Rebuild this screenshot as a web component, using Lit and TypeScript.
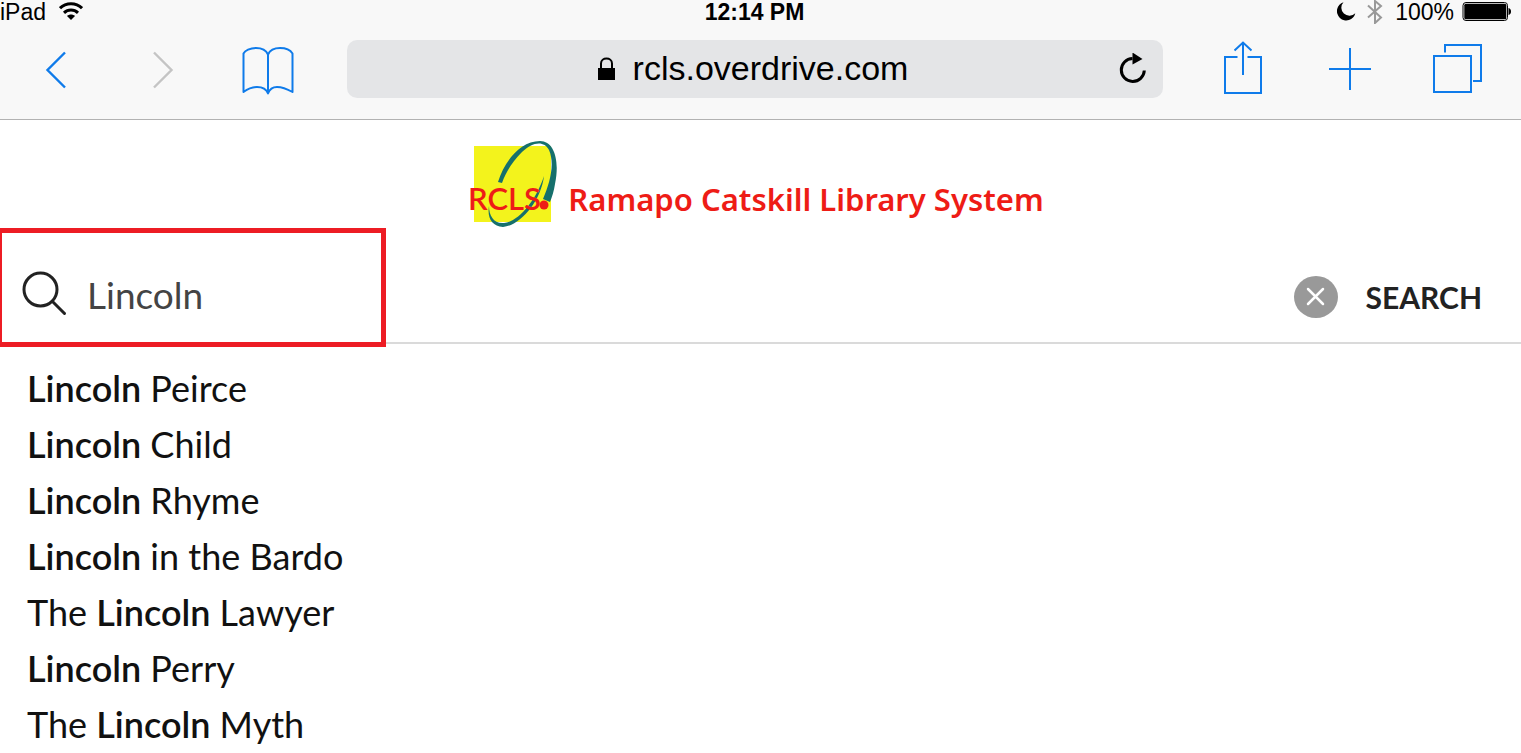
import { LitElement, html, css } from "lit";
import { customElement, property, state } from "lit/decorators.js";

@customElement("status-bar")
class StatusBar extends LitElement {
  static styles = css`
    :host {
      display: grid;
      grid-template-columns: 1fr auto 1fr;
      align-items: center;
      height: 24px;
      font: 23px/24px "Liberation Sans", Arial, sans-serif;
      color: #000;
    }
    .side { display: flex; align-items: center; }
    .left { gap: 13px; }
    .right { justify-content: flex-end; padding-right: 9px; }
    .time { font-weight: 700; padding-right: 12px; }
    .moon { margin-right: 11px; }
    .bluetooth { margin-right: 12px; }
    .battery { margin-left: 8px; }
    svg { display: block; flex: none; }
  `;

  render() {
    return html`
      <div class="side left">
        <span>iPad</span>
        <svg width="24" height="24" viewBox="0 0 24 24" fill="none" stroke="#000" stroke-width="3">
          <path d="M1 8.2C7 2.2 17 2.2 23 8.2" />
          <path d="M5 12.8C9 9 15 9 19 12.8" />
          <path d="M12 20L8 16C10.2 14 13.8 14 16 16Z" fill="#000" stroke="none" />
        </svg>
      </div>
      <span class="time">12:14 PM</span>
      <div class="side right">
        <svg class="moon" width="19" height="24" viewBox="0 0 19 24">
          <path d="M6.5 2.2A9.3 9.3 0 1 0 18.3 13.2A8 8 0 0 1 6.5 2.2Z" />
        </svg>
        <svg class="bluetooth" width="16" height="24" viewBox="0 0 16 24" fill="none" stroke="#999" stroke-width="2">
          <path d="M1 5.5L14 17.5L8 23V1L14 6L1 17.5" />
        </svg>
        <span>100%</span>
        <svg class="battery" width="50" height="24" viewBox="0 0 50 24">
          <rect x="1" y="2.500" width="44.500" height="18" rx="3" fill="none" stroke="#000" stroke-width="1" />
          <rect x="2.300" y="3.800" width="42" height="15.500" rx="1.500" />
          <path d="M46.500 8C48.200 8.500 49 9.600 49 11.500S48.200 14.500 46.500 15Z" />
        </svg>
      </div>
    `;
  }
}

@customElement("browser-toolbar")
class BrowserToolbar extends LitElement {
  @property() address = "";

  static styles = css`
    :host {
      display: flex;
      align-items: center;
      height: 58px;
      padding: 16px 11px 21px 3px;
      border-bottom: 1px solid #b2b2b2;
    }
    .group { display: flex; flex: none; gap: 1px; }
    button {
      display: flex;
      justify-content: center;
      align-items: center;
      width: 106px;
      height: 58px;
      padding: 0;
      border: 0;
      background: none;
    }
    svg { display: block; fill: none; stroke: #0f7bea; stroke-width: 2; }
    .off svg { stroke: #c4c4c4; }
    .address {
      flex: 1;
      display: grid;
      grid-template-columns: 1fr auto 1fr;
      align-items: center;
      height: 58px;
      margin: 0 27px 0 24px;
      border-radius: 10px;
      background: #e4e5e7;
    }
    .url { grid-column: 2; display: flex; align-items: center; gap: 18px; padding-right: 4px; }
    .url input {
      field-sizing: content;
      padding: 0 0 2px;
      border: 0;
      outline: 0;
      background: none;
      color: #000;
      font: 34px/40px "Liberation Sans", Arial, sans-serif;
    }
    .url svg { fill: #000; stroke: none; }
    .address .reload { justify-self: end; width: 60px; }
    .reload svg { stroke: #000; stroke-width: 3; }
  `;

  render() {
    return html`
      <nav class="group">
        <button aria-label="Back">
          <svg width="22" height="40" viewBox="0 0 22 40"><path d="M20 3.500L2.500 21L20 38.500" stroke-width="2.400" /></svg>
        </button>
        <button class="off" aria-label="Forward" disabled>
          <svg width="22" height="40" viewBox="0 0 22 40"><path d="M2 3.500L19.500 21L2 38.500" stroke-width="2.400" /></svg>
        </button>
        <button aria-label="Bookmarks">
          <svg width="56" height="52" viewBox="2 -1.500 56 52" stroke-linejoin="round">
            <path d="M28 10C26 5.500 21.500 3.500 16 3.500C10 3.500 5 6 3.500 9V47.500C7 45 11 42.500 17 42.500C23 42.500 26.500 45 28 49C29.500 45 33 42.500 37 42.500C43 42.500 48 45 52.500 47.500V9C50 5 45 3.500 40 3.500C34.500 3.500 30 5.500 28 10V49" />
          </svg>
        </button>
      </nav>
      <div class="address">
        <label class="url">
          <svg width="17" height="24" viewBox="0 0 17 24">
            <path d="M0 11H17V23H0Z" />
            <path d="M3 12V6.500C3 -.2 14 -.2 14 6.500V12" fill="none" stroke="#000" stroke-width="2" />
          </svg>
          <input type="text" aria-label="Address" .value=${this.address} />
        </label>
        <button class="reload" aria-label="Reload">
          <svg width="28" height="32" viewBox="0 1 28 32">
            <path d="M13.500 6.500A11.500 11.500 0 1 0 25.300 18.500" />
            <path d="M13.500 .5L23.500 7L13.500 12.500Z" fill="#000" stroke="none" />
          </svg>
        </button>
      </div>
      <nav class="group">
        <button aria-label="Share">
          <svg width="40" height="56" viewBox="0 1 40 56">
            <path d="M14.500 17H2V53H38V17H24.500M20 35V3M11.500 10.500L20 2.500L28.500 10.500" />
          </svg>
        </button>
        <button aria-label="New tab">
          <svg width="42" height="42" viewBox="0 0 42 42"><path d="M0 21H42M21 0V42" /></svg>
        </button>
        <button aria-label="Tabs">
          <svg width="52" height="50" viewBox="-2 1 52 50">
            <path d="M1 13H38V49H1ZM12 9.500V2H48V38H40" />
          </svg>
        </button>
      </nav>
    `;
  }
}

@customElement("library-brand")
class LibraryBrand extends LitElement {
  static styles = css`
    :host { display: flex; justify-content: center; padding: 20px 7px 0 0; }
    a { display: flex; gap: 10px; color: #ee1c16; text-decoration: none; }
    svg { display: block; overflow: visible; }
    .letters { font: 600 31px "Lato", sans-serif; fill: #ee1c16; }
    .name {
      padding-top: 37px;
      font: 600 31px/44px "Noto Sans", "Open Sans", sans-serif;
    }
  `;

  render() {
    return html`
      <a href="#">
        <svg width="88" height="88" viewBox="0 0 88 88" aria-hidden="true">
          <rect x="4" y="6" width="77" height="76" fill="#f3f31c" />
          <g fill="#16706c">
            <path d="M28 42C34 22 50 1 70 1C84 1 90 20 85 44C84 51 82 57 80 62L73 59C80 43 85 24 79 10C74 0 62 2 52 12C42 22 36 32 32 43Z" />
            <path d="M19 66C19 76 24 84 34 83C48 82 66 61 74 36C71 61 50 86 33 87C22 86 17 78 19 66Z" />
          </g>
          <text class="letters" x="-2" y="70">RCLS</text>
          <circle cx="74" cy="65" r="4.500" fill="#ee1c16" />
        </svg>
        <span class="name">Ramapo Catskill Library System</span>
      </a>
    `;
  }
}

@customElement("search-bar")
class SearchBar extends LitElement {
  @property() query = "";

  static styles = css`
    :host { display: block; position: relative; border-bottom: 2px solid #dadada; }
    form {
      display: flex;
      align-items: center;
      height: 96px;
      padding: 18px 39px 0 22px;
    }
    .field { flex: 1; display: flex; align-items: center; gap: 20px; }
    input {
      flex: 1;
      min-width: 0;
      padding: 2px 0 0;
      border: 0;
      outline: 0;
      background: none;
      color: #444;
      font: 37px/48px "Lato", sans-serif;
    }
    .actions { display: flex; align-items: center; gap: 28px; padding-top: 6px; }
    button { padding: 0; border: 0; background: none; }
    .submit { color: #222; font: 700 30px/36px "Lato", sans-serif; }
    svg { display: block; }
    .highlight {
      position: absolute;
      top: 0;
      left: -3px;
      width: 379px;
      height: 109px;
      border: 5px solid #ed1c24;
      pointer-events: none;
    }
  `;

  render() {
    return html`
      <form role="search" @submit=${(e: Event) => e.preventDefault()}>
        <label class="field">
          <svg width="45" height="46" viewBox="0 0 45 46" fill="none" stroke="#222" stroke-width="3" stroke-linecap="round">
            <circle cx="18.500" cy="18.500" r="16.500" />
            <path d="M30.500 30.500L42.500 42.500" />
          </svg>
          <input type="text" aria-label="Search" .value=${this.query} />
        </label>
        <div class="actions">
          <button type="button" aria-label="Clear">
            <svg width="44" height="42" viewBox="0 0 44 42">
              <ellipse cx="22" cy="21" rx="22" ry="21" fill="#999" />
              <path d="M14 13L29 28M29 13L14 28" stroke="#fff" stroke-width="2.500" stroke-linecap="round" />
            </svg>
          </button>
          <button class="submit">SEARCH</button>
        </div>
      </form>
      <div class="highlight"></div>
    `;
  }
}

@customElement("app-root")
class AppRoot extends LitElement {
  @state() query = "Lincoln";
  @state() suggestions = [
    "Lincoln Peirce",
    "Lincoln Child",
    "Lincoln Rhyme",
    "Lincoln in the Bardo",
    "The Lincoln Lawyer",
    "Lincoln Perry",
    "The Lincoln Myth",
  ];

  static styles = css`
    :host { display: block; background: #fff; }
    .chrome { background: #f8f8f8; }
    .suggestions { margin: 0; padding: 16px 27px 0; list-style: none; }
    .suggestions a {
      display: block;
      color: #111;
      font: 36px/56px "Lato", sans-serif;
      text-decoration: none;
    }
    b { font-weight: 600; }
  `;

  mark(text: string) {
    const [before, after] = text.split(this.query);
    return html`${before}<b>${this.query}</b>${after}`;
  }

  render() {
    return html`
      <header class="chrome">
        <status-bar></status-bar>
        <browser-toolbar address="rcls.overdrive.com"></browser-toolbar>
      </header>
      <main>
        <library-brand></library-brand>
        <search-bar query=${this.query}></search-bar>
        <ul class="suggestions">
          ${this.suggestions.map((s) => html`<li><a href="#">${this.mark(s)}</a></li>`)}
        </ul>
      </main>
    `;
  }
}
